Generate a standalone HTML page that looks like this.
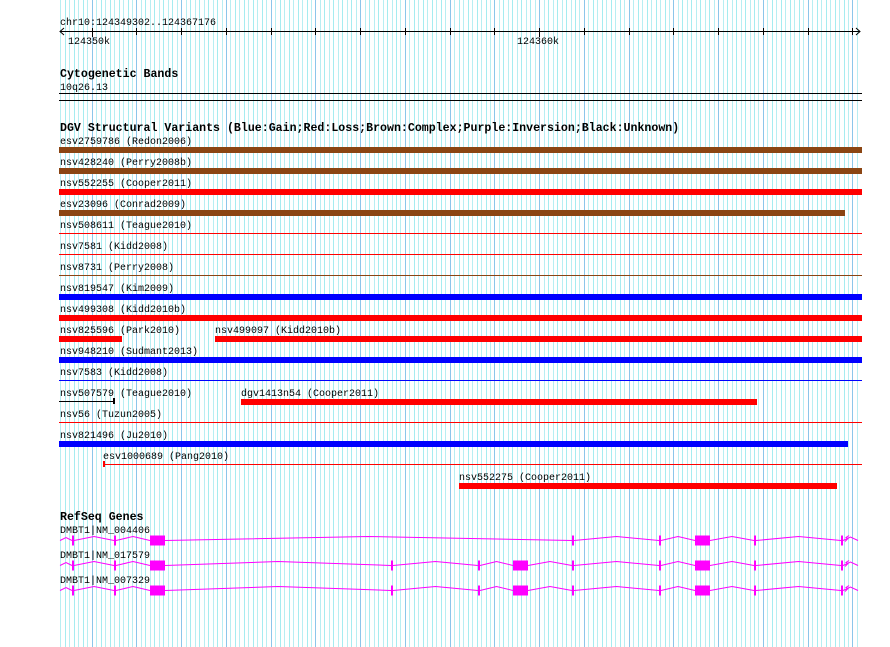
<!DOCTYPE html>
<html><head><meta charset="utf-8"><style>
html,body{margin:0;padding:0;background:#fff;}
svg{display:block}
text{font-family:"Liberation Mono",monospace;font-size:10px;fill:#000}
.b{font-weight:bold;font-size:11.6px}
</style></head><body>
<svg id="s" width="890" height="647" xmlns="http://www.w3.org/2000/svg" shape-rendering="crispEdges">
<g id="grid"></g>
<!-- ruler -->
<text x="60" y="25">chr10:124349302..124367176</text>
<line x1="60" y1="31.5" x2="860" y2="31.5" stroke="#000"/>
<polyline points="64,28 60,31.5 64,35" fill="none" stroke="#000" shape-rendering="auto"/>
<polyline points="856,28 860,31.5 856,35" fill="none" stroke="#000" shape-rendering="auto"/>
<g id="ticks" stroke="#000"></g>
<text x="68" y="44">124350k</text>
<text x="517" y="44">124360k</text>
<text class="b" x="60" y="77">Cytogenetic Bands</text>
<text x="60" y="90">10q26.13</text>
<rect x="59" y="93" width="803" height="1" fill="#000"/>
<rect x="59" y="100" width="803" height="1" fill="#000"/>
<text class="b" x="60" y="131">DGV Structural Variants (Blue:Gain;Red:Loss;Brown:Complex;Purple:Inversion;Black:Unknown)</text>

<text x="60" y="144">esv2759786 (Redon2006)</text>
<rect x="59" y="147" width="803" height="6" fill="#8b4513"/>
<text x="60" y="165">nsv428240 (Perry2008b)</text>
<rect x="59" y="168" width="803" height="6" fill="#8b4513"/>
<text x="60" y="186">nsv552255 (Cooper2011)</text>
<rect x="59" y="189" width="803" height="6" fill="#ff0000"/>
<text x="60" y="207">esv23096 (Conrad2009)</text>
<rect x="59" y="210" width="786" height="6" fill="#8b4513"/>
<text x="60" y="228">nsv508611 (Teague2010)</text>
<rect x="59" y="233" width="803" height="1" fill="#ff0000"/>
<text x="60" y="249">nsv7581 (Kidd2008)</text>
<rect x="59" y="254" width="803" height="1" fill="#ff0000"/>
<text x="60" y="270">nsv8731 (Perry2008)</text>
<rect x="59" y="275" width="803" height="1" fill="#8b4513"/>
<text x="60" y="291">nsv819547 (Kim2009)</text>
<rect x="59" y="294" width="803" height="6" fill="#0000ff"/>
<text x="60" y="312">nsv499308 (Kidd2010b)</text>
<rect x="59" y="315" width="803" height="6" fill="#ff0000"/>
<text x="60" y="333">nsv825596 (Park2010)</text>
<rect x="59" y="336" width="63" height="6" fill="#ff0000"/>
<text x="215" y="333">nsv499097 (Kidd2010b)</text>
<rect x="215" y="336" width="647" height="6" fill="#ff0000"/>
<text x="60" y="354">nsv948210 (Sudmant2013)</text>
<rect x="59" y="357" width="803" height="6" fill="#0000ff"/>
<text x="60" y="375">nsv7583 (Kidd2008)</text>
<rect x="59" y="380" width="803" height="1" fill="#0000ff"/>
<text x="60" y="396">nsv507579 (Teague2010)</text>
<rect x="59" y="401" width="55" height="1" fill="#000"/>
<rect x="113" y="398" width="2" height="6" fill="#000"/>
<text x="241" y="396">dgv1413n54 (Cooper2011)</text>
<rect x="241" y="399" width="516" height="6" fill="#ff0000"/>
<text x="60" y="417">nsv56 (Tuzun2005)</text>
<rect x="59" y="422" width="803" height="1" fill="#ff0000"/>
<text x="60" y="438">nsv821496 (Ju2010)</text>
<rect x="59" y="441" width="789" height="6" fill="#0000ff"/>
<text x="103" y="459">esv1000689 (Pang2010)</text>
<rect x="103" y="464" width="759" height="1" fill="#ff0000"/>
<rect x="103" y="461" width="2" height="6" fill="#ff0000"/>
<text x="459" y="480">nsv552275 (Cooper2011)</text>
<rect x="459" y="483" width="378" height="6" fill="#ff0000"/>

<text class="b" x="60" y="520">RefSeq Genes</text>
<text x="60" y="533">DMBT1|NM_004406</text>
<text x="60" y="558">DMBT1|NM_017579</text>
<text x="60" y="583">DMBT1|NM_007329</text>
<g id="genes"></g>
</svg>
<script>
var NS="http://www.w3.org/2000/svg";
function el(p,n,a){var e=document.createElementNS(NS,n);for(var k in a)e.setAttribute(k,a[k]);p.appendChild(e);return e;}
var g=document.getElementById('grid');
for(var k=0;;k++){var x=Math.round(60.4+4.475*k);if(x>858)break;
 var major=((k-7)%10===0);
 el(g,'rect',{x:x,y:0,width:1,height:647,fill:major?'#8cc6ea':(k%2?'#a6ecf0':'#b8eef2')});}
var t=document.getElementById('ticks');
for(var k=0;k<=17;k++){var x=Math.round(91.7+44.75*k)+0.5;
 var big=(k===0||k===10);
 el(t,'line',{x1:x,y1:28,x2:x,y2:big?37:35});}
var G=document.getElementById('genes');
var rows=[
 {y:540.5,ex:[[72,2],[114,2],[150,15],[572,2],[659,2],[695,15],[754,2],[841,2]]},
 {y:565.5,ex:[[72,2],[114,2],[150,15],[391,2],[478,2],[513,15],[572,2],[659,2],[695,15],[754,2],[841,2]]},
 {y:590.5,ex:[[72,2],[114,2],[150,15],[391,2],[478,2],[513,15],[572,2],[659,2],[695,15],[754,2],[841,2]]}];
rows.forEach(function(r){
 var y=r.y;
 var segs=[[60,r.ex[0][0]]];
 for(var i=0;i<r.ex.length-1;i++)segs.push([r.ex[i][0]+r.ex[i][1],r.ex[i+1][0]]);
 segs.push([843,858]);
 segs.forEach(function(s){var m=(s[0]+s[1])/2;var h=Math.min(4,(s[1]-s[0])/6+1);
  el(G,'polyline',{points:s[0]+','+y+' '+m+','+(y-h)+' '+s[1]+','+y,fill:'none',stroke:'#ff00ff','stroke-width':1,'shape-rendering':'auto'});});
 r.ex.forEach(function(e){var h=e[1]>2?10:10;el(G,'rect',{x:e[0],y:y-5,width:e[1],height:h,fill:'#ff00ff'});});
 el(G,'polyline',{points:'845,'+(y+1)+' 848,'+(y-2)+' 846,'+(y-3)+' 849,'+(y-5),fill:'none',stroke:'#ff00ff','shape-rendering':'auto'});
});
</script>
</body></html>
